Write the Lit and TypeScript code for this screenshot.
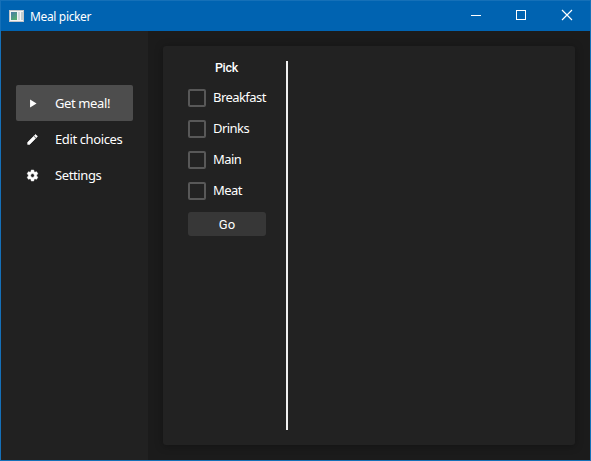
import { LitElement, html, css, svg } from "lit";
import { customElement, property, state } from "lit/decorators.js";
import { classMap } from "lit/directives/class-map.js";

const ICONS = {
  play: "M7.5 4.5v15l12-7.5z",
  edit: "M3 17.25V21h3.75L17.81 9.94l-3.75-3.75L3 17.25zM20.71 7.04c.39-.39.39-1.02 0-1.41l-2.34-2.34c-.39-.39-1.02-.39-1.41 0l-1.83 1.83 3.75 3.75 1.83-1.83z",
  settings:
    "M12 15.5A3.5 3.5 0 0 1 8.5 12 3.5 3.5 0 0 1 12 8.5a3.5 3.5 0 0 1 3.5 3.5 3.5 3.5 0 0 1-3.5 3.5m7.43-2.53c.04-.32.07-.64.07-.97s-.03-.66-.07-1l2.11-1.63c.19-.15.24-.42.12-.64l-2-3.46c-.12-.22-.39-.31-.61-.22l-2.49 1c-.52-.39-1.06-.73-1.69-.98l-.37-2.65A.506.506 0 0 0 14 2h-4c-.25 0-.46.18-.5.42l-.37 2.65c-.63.25-1.17.59-1.69.98l-2.49-1c-.22-.09-.49 0-.61.22l-2 3.46c-.13.22-.07.49.12.64L4.57 11c-.04.34-.07.67-.07 1s.03.65.07.97l-2.11 1.66c-.19.15-.25.42-.12.64l2 3.46c.12.22.39.3.61.22l2.49-1.01c.52.4 1.06.74 1.69.99l.37 2.65c.04.24.25.42.5.42h4c.25 0 .46-.18.5-.42l.37-2.65c.63-.26 1.17-.59 1.69-.99l2.49 1.01c.22.08.49 0 .61-.22l2-3.46c.12-.22.07-.49-.12-.64z",
};

@customElement("title-bar")
class TitleBar extends LitElement {
  @property() label = "";

  static styles = css`
    :host {
      display: flex;
      align-items: center;
      height: 30px;
      background: #0063b1;
      color: #fff;
    }
    .app-icon {
      margin-left: 8px;
      width: 16px;
      height: 14px;
    }
    .label {
      margin-left: 5px;
      flex: 1;
      font-size: 12px;
      letter-spacing: -0.35px;
    }
    .control {
      width: 45px;
      height: 30px;
    }
    .control:last-child {
      width: 46px;
    }
  `;

  render() {
    return html`
      <svg class="app-icon" viewBox="0 0 16 14">
        <defs>
          <linearGradient id="pane" x1="0" y1="0" x2="0.6" y2="1">
            <stop offset="0" stop-color="#4a7aa8" />
            <stop offset="1" stop-color="#55ab72" />
          </linearGradient>
        </defs>
        <rect x="0.5" y="1.5" width="14" height="11" fill="#f4f4f4" stroke="#c3c5c8" />
        <rect x="2" y="3" width="6" height="8" fill="url(#pane)" />
        <rect x="9" y="3" width="2" height="8" fill="#d5dbe0" />
        <rect x="12" y="3" width="2" height="8" fill="#c3ced0" />
      </svg>
      <span class="label">${this.label}</span>
      <svg class="control" viewBox="0 0 45 30" fill="none" stroke="#fff">
        <path d="M17 14.5h10" />
      </svg>
      <svg class="control" viewBox="0 0 45 30" fill="none" stroke="#fff">
        <rect x="17.5" y="9.5" width="9" height="9" />
      </svg>
      <svg class="control" viewBox="0 0 46 30" fill="none" stroke="#fff" stroke-width="1.15">
        <path d="M18 9l10 10M28 9L18 19" />
      </svg>
    `;
  }
}

@customElement("nav-item")
class NavItem extends LitElement {
  @property() icon: keyof typeof ICONS = "play";
  @property() label = "";
  @property({ type: Boolean }) active = false;

  static styles = css`
    .item {
      display: flex;
      align-items: center;
      height: 36px;
      padding-left: 10px;
      border-radius: 2px;
      color: #fff;
      font-size: 13px;
      letter-spacing: -0.38px;
      white-space: nowrap;
      cursor: pointer;
    }
    .active {
      background: #4d4d4d;
    }
    svg {
      width: 13px;
      height: 13px;
      margin-right: 16px;
      fill: #fff;
    }
    .edit,
    .settings {
      stroke: #fff;
      stroke-width: 1;
    }
  `;

  render() {
    return html`<div class=${classMap({ item: true, active: this.active })}>
      <svg viewBox="0 0 24 24">${svg`<path class=${this.icon} d=${ICONS[this.icon]} />`}</svg>
      <span>${this.label}</span>
    </div>`;
  }
}

@customElement("check-option")
class CheckOption extends LitElement {
  @property() label = "";

  static styles = css`
    .option {
      display: flex;
      align-items: center;
      gap: 7px;
      height: 18px;
      color: #fff;
      font-size: 13px;
      letter-spacing: -0.56px;
      white-space: nowrap;
    }
    .box {
      box-sizing: border-box;
      flex: none;
      width: 18px;
      height: 18px;
      border: 2px solid #585858;
      border-radius: 2px;
    }
    .text {
      padding-bottom: 2px;
    }
  `;

  render() {
    return html`<label class="option"><span class="box"></span><span class="text">${this.label}</span></label>`;
  }
}

@customElement("app-root")
class AppRoot extends LitElement {
  @state() private page = "Get meal!";

  private nav: { icon: keyof typeof ICONS; label: string }[] = [
    { icon: "play", label: "Get meal!" },
    { icon: "edit", label: "Edit choices" },
    { icon: "settings", label: "Settings" },
  ];
  private categories = ["Breakfast", "Drinks", "Main", "Meat"];

  static styles = css`
    :host {
      display: flex;
      flex-direction: column;
      box-sizing: border-box;
      width: 591px;
      height: 461px;
      border: 1px solid #1570b8;
      background: #1b1b1b;
      font-family: "Noto Sans", "Open Sans", sans-serif;
      overflow: hidden;
    }
    .body {
      flex: 1;
      display: flex;
      min-height: 0;
    }
    .sidebar {
      box-sizing: border-box;
      width: 147px;
      padding: 54px 15px 0;
      background: #212121;
    }
    .content {
      flex: 1;
      display: flex;
      padding: 15px;
    }
    .card {
      flex: 1;
      display: flex;
      box-sizing: border-box;
      padding: 15px 25px;
      background: #222;
      border-radius: 3px;
      box-shadow: 0 1px 8px rgba(0, 0, 0, 0.3);
    }
    .picker {
      display: flex;
      flex-direction: column;
      width: 78px;
    }
    .heading {
      margin-bottom: 14px;
      padding-right: 1px;
      text-align: center;
      color: #fff;
      font: 500 12.5px/14px Roboto, sans-serif;
      letter-spacing: -0.25px;
    }
    .options {
      display: flex;
      flex-direction: column;
      gap: 13px;
    }
    .go {
      margin-top: 12px;
      height: 24px;
      padding: 1px 0 0;
      border: 0;
      border-radius: 3px;
      background: #373737;
      color: #fff;
      font: 13px/23px Roboto, sans-serif;
    }
    .divider {
      width: 2px;
      margin-left: 20px;
      background: #f0f0f0;
    }
  `;

  render() {
    return html`
      <title-bar label="Meal picker"></title-bar>
      <div class="body">
        <nav class="sidebar">
          ${this.nav.map(
            (n) => html`<nav-item
              .icon=${n.icon}
              .label=${n.label}
              .active=${n.label === this.page}
              @click=${() => (this.page = n.label)}
            ></nav-item>`
          )}
        </nav>
        <main class="content">
          <section class="card">
            <div class="picker">
              <div class="heading">Pick</div>
              <div class="options">
                ${this.categories.map((c) => html`<check-option .label=${c}></check-option>`)}
              </div>
              <button class="go">Go</button>
            </div>
            <div class="divider"></div>
          </section>
        </main>
      </div>
    `;
  }
}
